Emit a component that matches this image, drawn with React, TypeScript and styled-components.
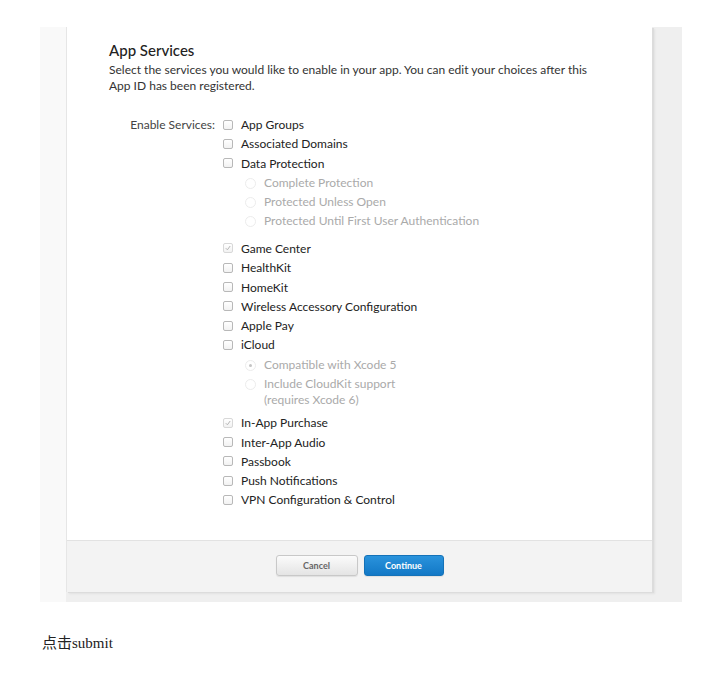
import React from "react";
import styled, { createGlobalStyle } from "styled-components";

const Global = createGlobalStyle`
  html, body { margin: 0; padding: 0; background: #fff; }
  body { font-family: "Liberation Serif", "Noto Sans CJK SC", serif; }
`;

const Page = styled.div`
  padding: 27px 0 0 40px;
`;

const Shot = styled.div`
  width: 642px;
  height: 575px;
  background: linear-gradient(to right, #f9f9f9 0, #f9f9f9 26px, #efefef 26px);
  display: flex;
  align-items: flex-start;
  padding-left: 26px;
  box-sizing: border-box;
`;

const Panel = styled.div`
  width: 586px;
  height: 565px;
  background: #fff;
  border-left: 1px solid #e6e6e6;
  box-shadow: 2px 1px 0 #dcdcdc, 3px 2px 2px rgba(0,0,0,0.06);
  display: flex;
  flex-direction: column;
  box-sizing: border-box;
  font-family: "Lato", "Open Sans", sans-serif;
  color: #333;
`;

const Body = styled.div`
  flex: 1;
  padding: 14px 0 0 42px;
`;

const Title = styled.h2`
  margin: 0;
  font-size: 15px;
  font-weight: 500;
  line-height: 18px;
  color: #222;
`;

const Desc = styled.p`
  margin: 3px 0 0;
  font-size: 12px;
  line-height: 16px;
  width: 490px;
  color: #333;
`;

const Form = styled.div`
  margin-top: 21px;
  display: grid;
  grid-template-columns: 106px 1fr;
  column-gap: 8px;
`;

const Label = styled.div`
  text-align: right;
  font-size: 12px;
  line-height: 19.3px;
  color: #444;
`;

const List = styled.div`
  display: flex;
  flex-direction: column;
`;

const Row = styled.div`
  display: flex;
  align-items: center;
  height: 19.3px;
  font-size: 12px;
  color: #222;
  gap: 8px;
`;

const Box = styled.span<{ $checked?: boolean }>`
  width: 8px;
  height: 8px;
  border: 1px solid ${(p) => (p.$checked ? "#d8d8d8" : "#b8b8b8")};
  border-radius: 2px;
  background: linear-gradient(#fff, #f2f2f2);
  display: inline-flex;
  align-items: center;
  justify-content: center;
  flex: none;
`;

const Sub = styled.div<{ $gap: number }>`
  display: flex;
  flex-direction: column;
  padding-left: 22px;
  margin-bottom: ${(p) => p.$gap}px;
`;

const RadioRow = styled.div`
  display: flex;
  align-items: flex-start;
  font-size: 12px;
  color: #aaa;
  gap: 8px;
  line-height: 19.3px;
`;

const Radio = styled.span<{ $on?: boolean }>`
  width: 9px;
  height: 9px;
  margin-top: 5px;
  border-radius: 50%;
  border: 1px solid #ececec;
  background: #fff;
  flex: none;
  display: inline-flex;
  align-items: center;
  justify-content: center;
  &::after {
    content: "";
    width: 3px;
    height: 3px;
    border-radius: 50%;
    background: ${(p) => (p.$on ? "#c4c4c4" : "transparent")};
  }
`;

const Wrapped = styled.span`
  display: block;
  line-height: 19.3px;
  & > span { display: block; line-height: 14px; }
`;

const Footer = styled.div`
  height: 52px;
  background: #f3f3f3;
  border-top: 1px solid #e2e2e2;
  display: flex;
  align-items: center;
  justify-content: center;
  gap: 6px;
  box-sizing: border-box;
  padding-bottom: 2px;
`;

const Button = styled.button<{ $primary?: boolean }>`
  width: ${(p) => (p.$primary ? 80 : 82)}px;
  height: 21px;
  border-radius: 3px;
  font-family: "Lato", sans-serif;
  font-size: 9px;
  font-weight: 700;
  cursor: pointer;
  padding: 0;
  border: 1px solid ${(p) => (p.$primary ? "#1472b8" : "#c8c8c8")};
  color: ${(p) => (p.$primary ? "#fff" : "#666")};
  background: ${(p) =>
    p.$primary
      ? "linear-gradient(#2a93dc, #1278c6)"
      : "linear-gradient(#fbfbfb, #e4e4e4)"};
  box-shadow: 0 1px 1px rgba(0,0,0,0.08);
`;

const Caption = styled.p`
  margin: 29px 0 0 2px;
  font-size: 15px;
  color: #222;
  font-family: "Liberation Serif", "Noto Sans CJK SC", serif;
`;

const Check = () => (
  <svg width="6" height="6" viewBox="0 0 6 6">
    <path d="M0.8 3.2 L2.4 4.8 L5.2 1" fill="none" stroke="#b5b5b5" strokeWidth="1" />
  </svg>
);

const CheckRow = ({ label, checked }: { label: string; checked?: boolean }) => (
  <Row>
    <Box $checked={checked}>{checked && <Check />}</Box>
    {label}
  </Row>
);

export default function App() {
  return (
    <>
      <Global />
      <Page>
        <Shot>
          <Panel>
            <Body>
              <Title>App Services</Title>
              <Desc>
                Select the services you would like to enable in your app. You can edit your choices after this App ID has been registered.
              </Desc>
              <Form>
                <Label>Enable Services:</Label>
                <List>
                  <CheckRow label="App Groups" />
                  <CheckRow label="Associated Domains" />
                  <CheckRow label="Data Protection" />
                  <Sub $gap={8}>
                    <RadioRow><Radio />Complete Protection</RadioRow>
                    <RadioRow><Radio />Protected Unless Open</RadioRow>
                    <RadioRow><Radio />Protected Until First User Authentication</RadioRow>
                  </Sub>
                  <CheckRow label="Game Center" checked />
                  <CheckRow label="HealthKit" />
                  <CheckRow label="HomeKit" />
                  <CheckRow label="Wireless Accessory Configuration" />
                  <CheckRow label="Apple Pay" />
                  <CheckRow label="iCloud" />
                  <Sub $gap={6}>
                    <RadioRow><Radio $on />Compatible with Xcode 5</RadioRow>
                    <RadioRow>
                      <Radio />
                      <Wrapped>
                        Include CloudKit support
                        <span>(requires Xcode 6)</span>
                      </Wrapped>
                    </RadioRow>
                  </Sub>
                  <CheckRow label="In-App Purchase" checked />
                  <CheckRow label="Inter-App Audio" />
                  <CheckRow label="Passbook" />
                  <CheckRow label="Push Notifications" />
                  <CheckRow label="VPN Configuration & Control" />
                </List>
              </Form>
            </Body>
            <Footer>
              <Button>Cancel</Button>
              <Button $primary>Continue</Button>
            </Footer>
          </Panel>
        </Shot>
        <Caption>点击submit</Caption>
      </Page>
    </>
  );
}
